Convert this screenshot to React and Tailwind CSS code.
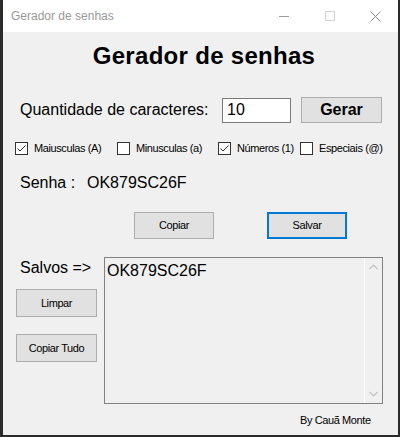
import React from "react";

const CheckBox = ({ checked, label, className }) => (
  <div className={`flex items-center gap-[6px] ${className}`}>
    <div className="w-[13px] h-[13px] border border-[#333] bg-white flex items-center justify-center shrink-0">
      {checked && (
        <svg width="11" height="11" viewBox="0 0 11 11">
          <polyline points="1.5,5.5 4,8 9.5,2.5" fill="none" stroke="#333" strokeWidth="1" />
        </svg>
      )}
    </div>
    <span className="text-[11px] leading-[13px] tracking-[-0.4px] whitespace-nowrap">{label}</span>
  </div>
);

// focused = blue 2px border (default button of the form)
const WinButton = ({ children, className, focused }) => (
  <div
    className={`bg-[#e1e1e1] flex items-center justify-center text-[11px] tracking-[-0.4px] ${
      focused ? "border-2 border-[#0078d7]" : "border border-[#adadad]"
    } ${className}`}
  >
    {children}
  </div>
);

const App = () => {
  return (
    <div className="w-[400px] h-[437px] flex flex-col bg-[#f0f0f0] border-l-[3px] border-r-2 border-b-2 border-[#2b2b2b] font-['Liberation_Sans',Arial,sans-serif] text-black overflow-hidden">
      {/* Title bar */}
      <div className="h-[32px] bg-white flex items-center shrink-0">
        <span className="ml-[8px] text-[12px] text-[#999]">Gerador de senhas</span>
        <div className="ml-auto flex h-full">
          <div className="w-[46px] flex items-center justify-center">
            <div className="w-[10px] h-px bg-[#999]" />
          </div>
          <div className="w-[46px] flex items-center justify-center">
            <div className="w-[10px] h-[10px] border border-[#d0d0d0]" />
          </div>
          <div className="w-[45px] flex items-center justify-center">
            <svg width="11" height="11" viewBox="0 0 11 11">
              <path d="M0.5 0.5 L10.5 10.5 M10.5 0.5 L0.5 10.5" stroke="#8a8a8a" strokeWidth="1" />
            </svg>
          </div>
        </div>
      </div>

      {/* Heading */}
      <h1 className="mt-[12px] pl-[7px] text-center text-[24px] leading-[24px] font-bold tracking-[0.3px]">
        Gerador de senhas
      </h1>

      {/* Quantidade */}
      <div className="mt-[29px] h-[26px] flex items-center pl-[17px]">
        <span className="w-[202px] text-[16px] leading-[18px]">Quantidade de caracteres:</span>
        <div className="w-[69px] h-[25px] border border-[#7a7a7a] bg-white flex items-center pl-[4px] text-[16px]">
          10
        </div>
        <div className="ml-[10px] w-[81px] h-[26px] bg-[#e1e1e1] border border-[#adadad] flex items-center justify-center text-[16px] font-bold">
          Gerar
        </div>
      </div>

      {/* Options */}
      <div className="mt-[19px] h-[13px] flex items-center pl-[12px]">
        <CheckBox checked label="Maiusculas (A)" className="w-[102px]" />
        <CheckBox label="Minusculas (a)" className="w-[101px]" />
        <CheckBox checked label="Números (1)" className="w-[82px]" />
        <CheckBox label="Especiais (@)" />
      </div>

      {/* Senha */}
      <div className="mt-[19px] flex items-center pl-[17px] text-[16px] leading-[18px]">
        <span className="w-[67px]">Senha :</span>
        <span>OK879SC26F</span>
      </div>

      <div className="mt-[20px] flex pl-[131px] gap-[53px]">
        <WinButton className="w-[80px] h-[27px]">Copiar</WinButton>
        <WinButton focused className="w-[80px] h-[27px]">Salvar</WinButton>
      </div>

      {/* Salvos */}
      <div className="mt-[18px] flex pl-[13px]">
        <div className="w-[88px] flex flex-col">
          <span className="mt-[2px] pl-[4px] text-[16px] leading-[18px]">Salvos =&gt;</span>
          <WinButton className="mt-[12px] w-[81px] h-[28px]">Limpar</WinButton>
          <WinButton className="mt-[17px] w-[81px] h-[28px]">Copiar Tudo</WinButton>
        </div>
        <div className="w-[279px] h-[147px] border border-[#828282] flex">
          <div className="flex-1 pl-[2px] pt-[4px] text-[16px] leading-[18px]">OK879SC26F</div>
          <div className="w-[18px] border-l border-white flex flex-col items-center justify-between py-[6px]">
            <svg width="9" height="6" viewBox="0 0 9 6">
              <polyline points="0.5,5 4.5,1 8.5,5" fill="none" stroke="#c2c2c2" strokeWidth="1.2" />
            </svg>
            <svg width="9" height="6" viewBox="0 0 9 6">
              <polyline points="0.5,1 4.5,5 8.5,1" fill="none" stroke="#c2c2c2" strokeWidth="1.2" />
            </svg>
          </div>
        </div>
      </div>

      <div className="mt-[10px] pl-[297px] text-[11px] leading-[13px] tracking-[-0.4px] whitespace-nowrap">
        By Cauã Monte
      </div>
    </div>
  );
};

export default App;
